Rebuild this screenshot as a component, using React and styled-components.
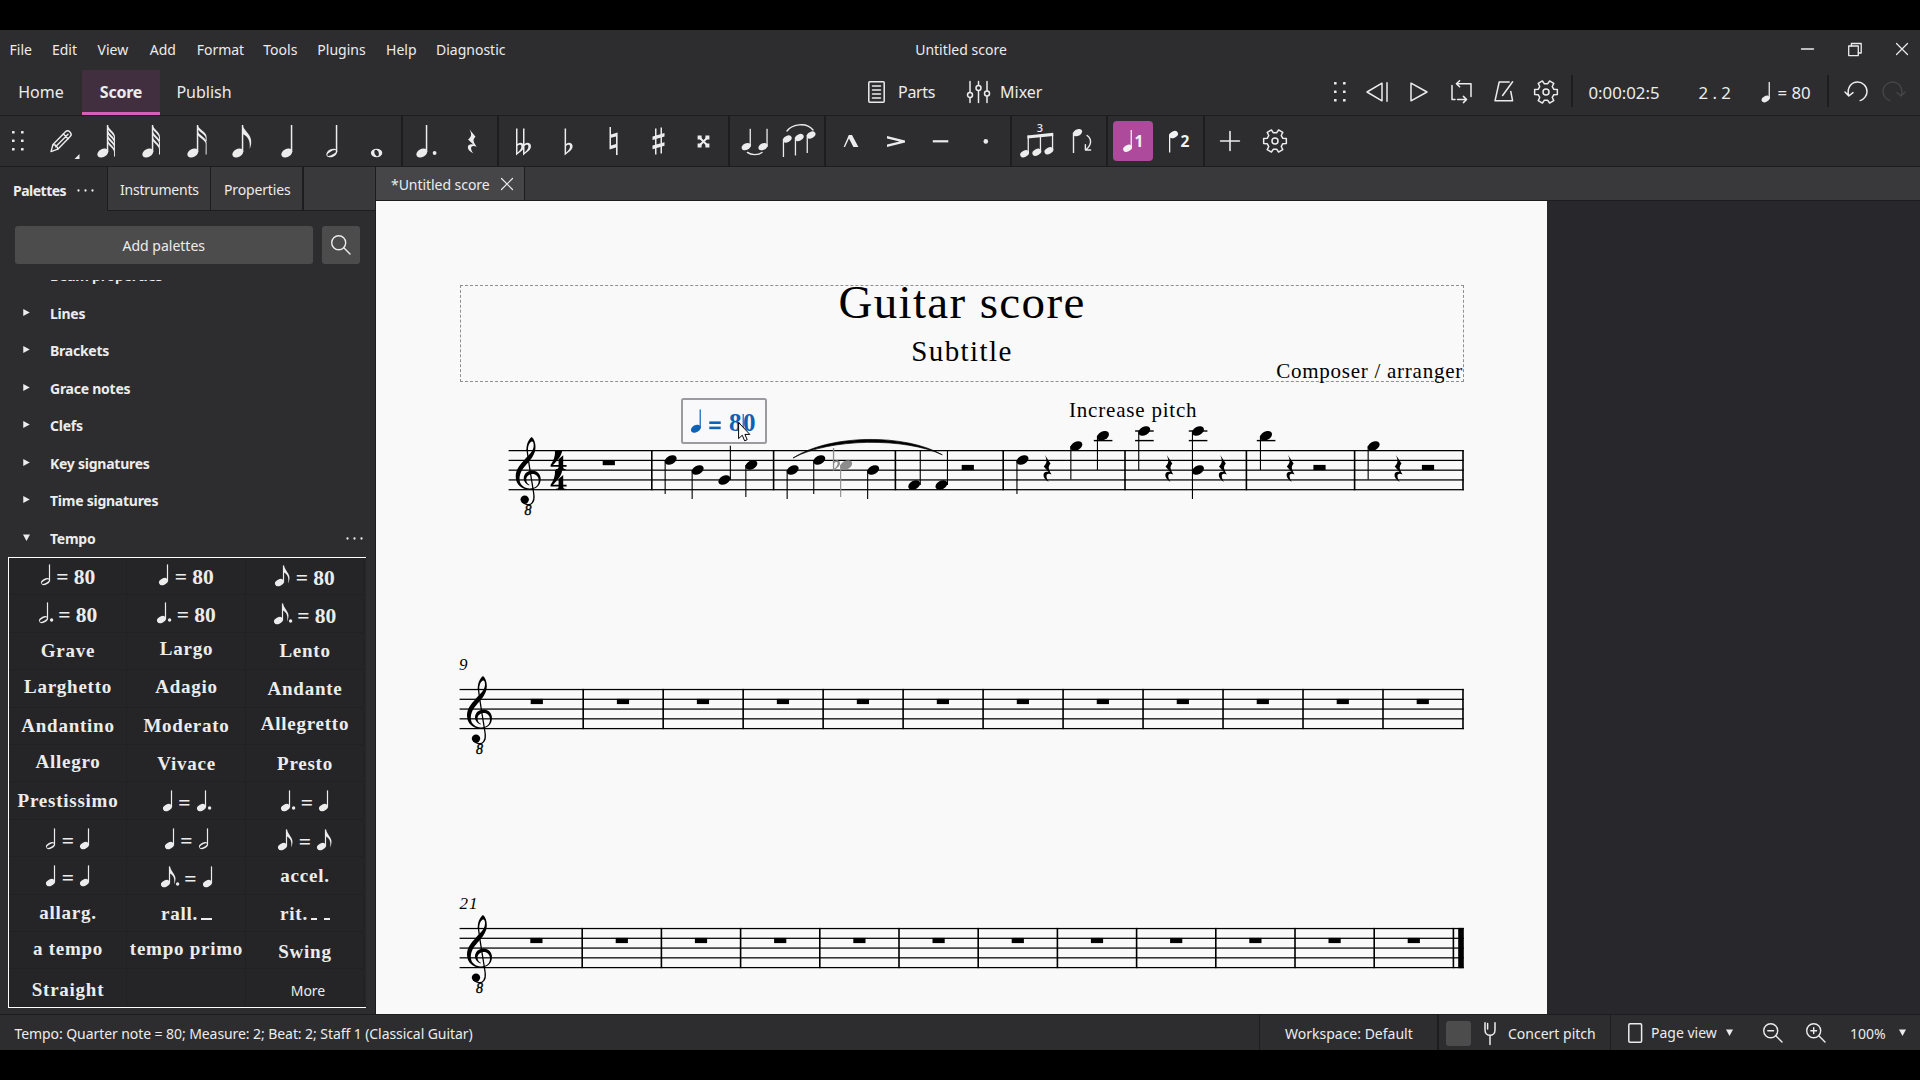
import React from "react";
import styled, { createGlobalStyle, css } from "styled-components";

const c = {
  bar: "#2d2d30",
  line: "#1d1d1f",
  tab: "#39393b",
  docTab: "#464649",
  text: "#ececec",
  button: "#4c4c4d",
  palette: "#252527",
  accent: "#ad4a9b",
  canvas: "#28282c",
  page: "#f9f9f9",
};

const GlobalStyle = createGlobalStyle`
  * { box-sizing: border-box; }
  body {
    margin: 0;
    background: #000;
    color: ${c.text};
    font-family: "Noto Sans", "Open Sans", sans-serif;
    font-size: 14px;
  }
  svg { display: block; flex: none; }
`;

const Screen = styled.div`
  display: flex;
  flex-direction: column;
  width: 1920px;
  height: 1080px;
  padding: 30px 0;
  background: #000;
  overflow: hidden;
  white-space: nowrap;
`;

/* ---------- title bar ---------- */
const TitleBar = styled.header`
  display: grid;
  grid-template-columns: 1fr auto 1fr;
  align-items: center;
  height: 40px;
  padding-bottom: 2px;
  background: ${c.bar};
`;
const Menu = styled.nav`
  display: flex;
  padding-left: 9.5px;
  gap: 20px;
`;
const MenuItem = styled.span`
  margin-left: ${(p) => p.$ml || 0}px;
`;
const WindowTitle = styled.span`
  padding-left: 2px;
`;
const WindowControls = styled.div`
  display: flex;
  justify-content: flex-end;
  padding-right: 12.5px;
  gap: 34px;
`;

/* ---------- main toolbar ---------- */
const MainBar = styled.div`
  display: flex;
  height: 46px;
  background: ${c.bar};
  border-bottom: 1px solid ${c.line};
`;
const NavTab = styled.div`
  display: flex;
  align-items: center;
  justify-content: center;
  width: ${(p) => p.$w}px;
  font-size: 16px;
  padding-bottom: 2px;
  ${(p) =>
    p.$active &&
    css`
      font-weight: 700;
      letter-spacing: -0.2px;
      background: #412f40;
      padding: 1px 0 0;
      border-bottom: 3px solid #d55fbb;
    `}
`;
const ViewButton = styled.div`
  display: flex;
  align-items: center;
  width: ${(p) => p.$w}px;
  padding-bottom: 2px;
  margin-left: ${(p) => p.$ml || 0}px;
  gap: ${(p) => p.$gap}px;
  font-size: 16px;
  letter-spacing: ${(p) => p.$ls}px;
`;
const Slot = styled.div`
  display: flex;
  align-items: center;
  justify-content: center;
  width: ${(p) => p.$w || 45}px;
  margin-left: ${(p) => p.$ml || 0}px;
  padding-bottom: ${(p) => p.$pb || 0}px;
`;
const Divider = styled.div`
  width: ${(p) => p.$w || 2}px;
  margin: ${(p) => p.$m || "0"};
  background: ${c.line};
`;
const Readout = styled.div`
  display: flex;
  align-items: center;
  width: ${(p) => p.$w}px;
  gap: 3px;
  font-size: 16.8px;
`;

/* ---------- note input toolbar ---------- */
const NoteBar = styled.div`
  display: flex;
  height: 51px;
  background: ${c.bar};
  border-bottom: 1px solid ${c.line};
`;
const VoiceSlot = styled(Slot)`
  margin: 5px 3px 5px 2px;
  width: 40px;
  border-radius: 4px;
  background: ${(p) => (p.$on ? c.accent : "transparent")};
`;

/* ---------- body ---------- */
const Body = styled.div`
  display: flex;
  height: 847px;
`;
const Sidebar = styled.aside`
  display: flex;
  flex-direction: column;
  width: 376px;
  background: ${c.bar};
  border-right: 1px solid ${c.line};
`;
const PanelTabs = styled.div`
  display: flex;
  height: 44px;
`;
const PanelTab = styled.div`
  display: flex;
  align-items: center;
  width: ${(p) => p.$w}px;
  padding: 2px 0 0 ${(p) => p.$pl || 0}px;
  gap: 11px;
  letter-spacing: ${(p) => p.$ls || 0}px;
  background: ${(p) => (p.$active ? c.bar : c.tab)};
  border-bottom: ${(p) => (p.$active ? "none" : `1px solid ${c.line}`)};
  border-right: ${(p) => p.$br ?? 1}px solid ${c.line};
  ${(p) => p.$active && "font-weight: 700;"}
`;
const SearchRow = styled.div`
  display: flex;
  gap: 9.5px;
  padding: 15px 15px 0;
  height: 69px;
`;
const GrayButton = styled.button`
  display: flex;
  align-items: center;
  justify-content: center;
  width: ${(p) => p.$w}px;
  height: 38px;
  padding: 0;
  border: 0;
  border-radius: 3px;
  background: ${c.button};
  color: ${c.text};
  font: inherit;
`;
const PaletteList = styled.div`
  display: flex;
  flex-direction: column;
  height: 277px;
  justify-content: flex-end;
  overflow: hidden;
`;
const PaletteRow = styled.div`
  display: flex;
  flex: none;
  align-items: center;
  height: 37.5px;
  padding: 0 12px 0 23px;
  font-weight: 700;
  letter-spacing: -0.25px;
`;
const ArrowBox = styled.div`
  width: 27px;
  padding-bottom: 2px;
`;
const Grow = styled.div`
  flex: 1;
`;
const PaletteGrid = styled.div`
  display: grid;
  grid-template-columns: 118px 119px 118px;
  grid-template-rows: repeat(12, 37.42px);
  width: 358px;
  margin-left: 8px;
  background: ${c.palette};
  border: solid #fff;
  border-width: 1px 0 1px 1px;
`;
const Cell = styled.div`
  display: flex;
  justify-content: center;
  align-items: baseline;
  height: 100%;
  padding-top: ${(p) => p.$drop}px;
  line-height: 24px;
  box-shadow: inset -1px -1px 0 #212123;
  font-family: "Liberation Serif", serif;
  font-weight: 700;
  font-size: 19px;
  letter-spacing: 0.75px;
`;
const Beat = styled.span`
  font-size: 21.5px;
  letter-spacing: 0;
  margin: 0 ${(p) => p.$after || 0}px 0 ${(p) => p.$before || 0}px;
`;
const MoreLink = styled.span`
  font-family: "Noto Sans", sans-serif;
  font-weight: 400;
  font-size: 14px;
  letter-spacing: 0;
  padding-left: 6px;
`;

const Main = styled.main`
  display: flex;
  flex-direction: column;
  flex: 1;
`;
const DocTabs = styled.div`
  display: flex;
  height: 34px;
  background: ${c.tab};
  border-bottom: 1px solid ${c.line};
`;
const DocTab = styled.div`
  display: flex;
  align-items: center;
  width: 149px;
  padding: 1px 0 0 15px;
  gap: 11px;
  letter-spacing: -0.05px;
  background: ${c.docTab};
  border-right: 1px solid ${c.line};
`;
const Canvas = styled.div`
  display: flex;
  flex: 1;
  background: ${c.canvas};
`;
const Page = styled.div`
  width: 1171px;
  height: 813px;
  padding-top: 84px;
  background: ${c.page};
  color: #000;
  font-family: "Liberation Serif", serif;
`;
const TitleFrame = styled.div`
  height: 97px;
  margin: 0 83px 0 84px;
  border: 1px dashed #909090;
`;
const ScoreTitle = styled.h1`
  margin: 0;
  font-size: 47px;
  font-weight: 400;
  line-height: 32px;
  letter-spacing: 1.35px;
  text-align: center;
`;
const Credits = styled.div`
  display: grid;
  grid-template-columns: 1fr auto 1fr;
  margin-top: 17px;
`;
const Subtitle = styled.div`
  grid-column: 2;
  font-size: 29px;
  line-height: 32px;
  letter-spacing: 1.4px;
`;
const Composer = styled.div`
  margin-top: 24px;
  font-size: 21px;
  line-height: 24px;
  letter-spacing: 0.75px;
  justify-self: end;
`;

/* ---------- status bar ---------- */
const StatusBar = styled.footer`
  display: flex;
  height: 36px;
  background: ${c.bar};
  border-top: 1px solid ${c.line};
`;
const StatusItem = styled.div`
  display: flex;
  align-items: center;
  width: ${(p) => p.$w}px;
  padding: ${(p) => p.$pt ?? 1}px 0 0 ${(p) => p.$pl || 0}px;
  gap: ${(p) => p.$gap || 0}px;
  letter-spacing: ${(p) => p.$ls || 0}px;
`;
const CheckBox = styled.div`
  width: 25px;
  height: 25px;
  border-radius: 3px;
  background: ${c.button};
`;

/* ---------- icons ---------- */
const Icon = ({ w, h, children, sw = 1.5, color = "#ececec", vb }) => (
  <svg width={w} height={h} viewBox={vb || `0 0 ${w} ${h}`} fill="none" stroke={color} strokeWidth={sw} strokeLinecap="round" strokeLinejoin="round" overflow="visible">
    {children}
  </svg>
);

const Grip = () => (
  <svg width="12" height="20" fill={c.text}>
    {[0, 8.5, 17].map((y) => [0, 9].map((x) => <rect key={`${x}-${y}`} x={x} y={y} width="2.6" height="2.6" rx="0.6" />))}
  </svg>
);

const gearPath = (() => {
  const pts = [];
  for (let i = 0; i < 6; i++) {
    [[-19, 8.3], [-12, 11.6], [12, 11.6], [19, 8.3]].forEach(([da, r]) => {
      const a = ((i * 60 + da) * Math.PI) / 180;
      pts.push(`${(12 + r * Math.cos(a)).toFixed(2)} ${(12 + r * Math.sin(a)).toFixed(2)}`);
    });
  }
  return `M${pts.join("L")}Z`;
})();
const Gear = () => (
  <Icon w={24} h={24} sw={1.5}>
    <path d={gearPath} />
    <circle cx="12" cy="12" r="3" />
  </Icon>
);
const Dots = () => (
  <svg width="17" height="3" fill={c.text}>
    <circle cx="1.5" cy="1.5" r="1.15" />
    <circle cx="8.5" cy="1.5" r="1.15" />
    <circle cx="15.5" cy="1.5" r="1.15" />
  </svg>
);
const Cross = () => (
  <Icon w={12} h={12} sw={1.2}>
    <path d="M0.5 0.5L11.5 11.5M11.5 0.5L0.5 11.5" />
  </Icon>
);
const Magnifier = ({ mark }) => (
  <Icon w={20} h={20} sw={1.4}>
    <circle cx="7.7" cy="7.7" r="7" />
    <path d="M12.8 12.8L19 19" />
    {mark && <path d={mark} />}
  </Icon>
);
const Caret = ({ down, size = 7 }) => (
  <svg width={size} height={size} viewBox="0 0 6 6" fill={c.text}>
    <path d={down ? "M0 0.4H6L3 6Z" : "M0.2 0V6L5.8 3Z"} />
  </svg>
);

/* a notehead is drawn round its own centre */
const Head = ({ x, y, r = 5.6, fill = c.text, open }) =>
  open ? (
    <path
      transform={`translate(${x} ${y}) rotate(-28) scale(${r / 5.6})`}
      fillRule="evenodd"
      fill={fill}
      d="M-6 0A6 3.9 0 1 1 6 0A6 3.9 0 1 1 -6 0ZM-4.9 0.5A4.9 1.7 0 1 0 4.9 -0.5A4.9 1.7 0 1 0 -4.9 0.5Z"
    />
  ) : (
    <ellipse cx={x} cy={y} rx={r * 1.06} ry={r * 0.72} fill={fill} transform={`rotate(-28 ${x} ${y})`} />
  );

const flag = (x, y) =>
  `M${x} ${y}C${x + 1} ${y + 6} ${x + 9.5} ${y + 9} ${x + 8.6} ${y + 18}C${x + 8.4} ${y + 20} ${x + 8} ${y + 22} ${x + 7} ${y + 24}C${x + 8.2} ${y + 16} ${x + 5} ${y + 11} ${x} ${y + 9}Z`;
/* one of several stacked flags: a diagonal blade that thins into a vertical tail */
const blade = (x, y, w, end) =>
  `M${x} ${y}C${x + 0.8} ${y + 4.6} ${x + w} ${y + 6.5} ${x + w} ${y + 12}L${x + w} ${end}H${x + w - 1}L${x + w - 0.9} ${y + 13}C${x + w - 1.2} ${y + 9.5} ${x + 3} ${y + 8} ${x} ${y + 4.2}Z`;

const DurationNote = ({ flags = 0, open, dot }) => {
  const sx = flags ? 22.6 : 26.6;
  const hx = sx - 4.8;
  const step = flags === 4 ? 4.8 : 5.8;
  const w = flags === 2 ? 9 : 7.4;
  const last = flags === 4 ? 40.4 : 38.5;
  return (
    <svg width="45" height="50" fill={c.text}>
      <Head x={hx} y={37} r={5.5} open={open} />
      <rect x={sx - 0.8} y="9" width="1.5" height="27" />
      {flags === 1 && <path d={flag(sx, 9)} />}
      {flags > 1 &&
        Array.from({ length: flags }, (_, i) => {
          const y = 9 + i * step;
          return <path key={i} d={blade(sx, y, w, i === flags - 1 ? last : y + 16)} />;
        })}
      {dot && <circle cx="34.6" cy="37" r="1.9" />}
    </svg>
  );
};
const WholeNote = () => (
  <svg width="45" height="50">
    <path fillRule="evenodd" fill={c.text} d="M15.9 37A5.7 4.2 0 1 1 27.3 37A5.7 4.2 0 1 1 15.9 37ZM19.3 35.8A2 3.1 -20 1 0 23.9 38.2A2 3.1 -20 1 0 19.3 35.8Z" />
  </svg>
);
const restPath =
  "M1.6 0L7.2 8.4C4.6 11.8 4.8 13.4 8.2 19.4C5 18 2.8 18.8 3.2 21.6C3.4 23.6 4.2 25.2 5.4 27C2 25 0 22.5 .2 19.8C.4 17.2 2.6 16.2 5.2 17L.4 11.4C3.8 8 4 5.6 1.6 0Z";
const flatD = "M0 0H1.5V15.5C4 13.3 8 14 8 17.8C8 21.5 4 23.6 0 27ZM1.5 17.6V24.2C4 22 5.4 20 5.4 18C5.4 15.8 3 15.7 1.5 17.6Z";
const Glyph = ({ children }) => (
  <svg width="45" height="50" fill={c.text} overflow="visible">
    {children}
  </svg>
);
const strokeProps = { fill: "none", stroke: c.text, strokeWidth: 1.4, strokeLinecap: "round", strokeLinejoin: "round" };

const Pencil = () => (
  <Glyph>
    <g {...strokeProps}>
      <path d="M11 35.6L13 28.5L25.5 15.8C28.3 13 33 17.6 30.2 20.5L17.8 33.2Z" />
      <path d="M13.2 28.7C15.8 28.6 17.8 30.6 17.7 33M15.6 30.8L28 18.2M23.4 18L28 22.7" />
    </g>
    <path d="M39.5 38V43H34.5Z" />
  </Glyph>
);
const Tie = () => (
  <Glyph>
    <Head x={14.2} y={30.6} r={4.6} />
    <rect x="17.6" y="12.8" width="1.3" height="18" />
    <Head x={31} y={30.6} r={4.6} />
    <rect x="34.4" y="12.8" width="1.3" height="18" />
    <path {...strokeProps} d="M15.4 36.4C19 39.4 26.6 39.4 30 36.4" />
  </Glyph>
);
const SlurIcon = () => (
  <Glyph>
    {[[10.4, 23], [22.4, 21.5], [34.2, 19]].map(([x, y]) => (
      <g key={x}>
        <Head x={x} y={y} r={4.3} />
        <rect x={x - 4.6} y={y} width="1.3" height={18} />
      </g>
    ))}
    <path {...strokeProps} d="M10 15C14 9 29 5 36 14" />
  </Glyph>
);
const Tuplet = () => (
  <Glyph>
    <text x="26" y="15.6" fontSize="11" textAnchor="middle" fontFamily="Noto Sans, sans-serif" fontWeight="500">3</text>
    <path d="M13.4 19.4L39.2 16.8V20L13.4 22.6Z" />
    {[[10.6, 37.7], [22.8, 36.3], [34.9, 34.7]].map(([x, y], i) => (
      <g key={x}>
        <Head x={x} y={y} r={4.4} />
        <rect x={x + 3} y={19.5 - i} width="1.3" height={y - 20 + i} />
      </g>
    ))}
  </Glyph>
);
const Flip = () => (
  <Glyph>
    <Head x={18.6} y={16.6} r={4.6} />
    <rect x="13.8" y="16.5" width="1.4" height="20.5" />
    <path {...strokeProps} d="M28.1 19.5C33.1 23 32.6 29.5 27.1 33.5M26.4 28.6V34H31.6" />
  </Glyph>
);
const Voice = ({ n }) => (
  <svg width="40" height="40" fill="#f2f2f2" overflow="visible">
    {n === 1 ? (
      <>
        <Head x={14.6} y={27.3} r={4.4} fill="#f2f2f2" />
        <rect x="17.6" y="9" width="1.3" height="18" />
      </>
    ) : (
      <>
        <Head x={15.6} y={13.6} r={4.4} fill="#f2f2f2" />
        <rect x="11" y="13.5" width="1.3" height="18" />
      </>
    )}
    <text x={n === 1 ? 21.5 : 22.5} y="26" fontSize="15.5" fontWeight="700" fontFamily="Noto Sans, sans-serif">{n}</text>
  </svg>
);

/* small notes for the tempo palette; they sit on the text baseline */
const Tone = ({ kind = "q", dot, fill = c.text }) => {
  const w = (kind === "e" ? 14.5 : 9.5) + (dot ? (kind === "e" ? 3 : 4) : 0);
  return (
    <svg width={w} height="20" fill={fill} overflow="visible">
      <Head x={4.4} y={17.6} r={4.4} open={kind === "h"} fill={fill} />
      <rect x="7.9" y="0.4" width="1.2" height="17" />
      {kind === "e" && <path d="M9 0.4C9.5 5 15.6 9 14.4 14C14.2 15.8 13.8 17 13 18.6C14.2 12.4 12.5 9.5 9 7.4Z" />}
      {dot && <circle cx={w - 0.9} cy="18" r="1.7" />}
    </svg>
  );
};
const Mark = ({ a, b }) => (
  <>
    <Tone {...a} />
    <Beat $before={6} $after={b ? 6 : 5}>=</Beat>
    {b ? <Tone {...b} /> : <Beat>80</Beat>}
  </>
);
const Dash = styled.span`
  width: ${(p) => p.$w}px;
  height: 1.5px;
  margin-left: ${(p) => p.$ml}px;
  background: ${c.text};
`;

const q = { kind: "q" }, h = { kind: "h" }, e = { kind: "e" };
const qd = { kind: "q", dot: true }, hd = { kind: "h", dot: true }, ed = { kind: "e", dot: true };
/* each entry: what the cell shows, and its baseline below the top of the cell */
const cells = [
  [<Mark a={h} />, 25.5], [<Mark a={q} />, 25.5], [<Mark a={e} />, 26.5],
  [<Mark a={hd} />, 26], [<Mark a={qd} />, 26], [<Mark a={ed} />, 27],
  ["Grave", 24.9], ["Largo", 22.9], ["Lento", 24.9],
  ["Larghetto", 23.2], ["Adagio", 23.2], ["Andante", 25.2],
  ["Andantino", 25], ["Moderato", 25], ["Allegretto", 22.8],
  ["Allegro", 23.8], ["Vivace", 25.8], ["Presto", 25.8],
  ["Prestissimo", 25.2], [<Mark a={q} b={qd} />, 26.7], [<Mark a={qd} b={q} />, 26.7],
  [<Mark a={h} b={q} />, 27.2], [<Mark a={q} b={h} />, 27.2], [<Mark a={e} b={e} />, 28],
  [<Mark a={q} b={q} />, 27.2], [<Mark a={ed} b={q} />, 28], ["accel.", 25.6],
  ["allarg.", 25], [<>rall.<Dash $w={11} $ml={3} /></>, 26.2], [<>rit.<Dash $w={6} $ml={3} /><Dash $w={6} $ml={7} /></>, 26.2],
  ["a tempo", 23.8], ["tempo primo", 23.8], ["Swing", 26.8],
  ["Straight", 27], ["", 24], [<MoreLink>More</MoreLink>, 28.6],
];

/* ---------- engraving ---------- */
const SP = 9.77;
const Staff = ({ x1, x2, y }) =>
  [0, 1, 2, 3, 4].map((i) => <rect key={i} x={x1} y={y + i * SP - 0.6} width={x2 - x1} height="1.25" fill="#000" />);
const Bars = ({ xs, y }) => xs.map((x) => <rect key={x} x={x - 0.8} y={y - 0.6} width="1.6" height={4 * SP + 1.2} fill="#000" />);
const BlockRest = ({ x, y }) => <rect x={x - 6.1} y={y} width="12.2" height="5.2" />;
const QuarterRest = ({ x }) => <path d={restPath} transform={`translate(${x - 4.2} 455)`} />;
const Clef = ({ x, y }) => (
  <g transform={`translate(${x} ${y})`}>
    <path d="M16 0C18.5 2 19.8 6 19.8 10C19.8 17 15.5 22 12.5 25.5C8 30.5 3.8 35 3.8 42C3.8 48 8.5 51.2 14 51.4C19.5 51.5 23 48.5 23 43.5C23 39.4 20 37 17 37C13 37 10.5 39.5 10.5 42.5C10.5 45 11.8 46.8 13.8 47.8L13.4 48.5C10 47 8 44.5 8 41.5C8 37 11.5 33.4 16.5 33.4C21.5 33.4 25 37 25 42C25 48.5 20 52.6 13.8 52.6C6 52.6 0 47.5 0 39.5C0 32.5 4.5 27.5 9 22.5C13 18 18 14 18 8.5C18 6 17.2 4.4 16.2 4.6C14 5 12.2 9 12.2 13L10.8 13C10.6 8 12.5 2.5 16 0Z" />
    <path d="M11.4 12C11.8 20 17.2 50 18.2 58C19 65 15.5 68.2 12 67.7C9.5 67.4 7.5 66 6.5 64" fill="none" stroke="#000" strokeWidth="1.3" />
    <circle cx="9" cy="62.6" r="4.2" />
    <text x="12.4" y="77.6" fontSize="14" fontStyle="italic" textAnchor="middle" fontFamily="Liberation Serif, serif" stroke="#000" strokeWidth="0.4">8</text>
  </g>
);
const fourPath =
  "M4.4 0H11.6C11 5.5 6.5 10.5 2.4 14.4H8V8.6L12.6 4.6V14.4H16V16.1H12.6C12.6 17.8 13 18.3 15 18.4V19.5H5.2V18.4C7.4 18.3 8 17.8 8 16.1H0V14.4C3 10.5 4.8 5.5 4.4 0Z";

const Note = ({ x, y, to, up, fill = "#000", ledger = [] }) => (
  <g fill={fill}>
    <Head x={x} y={y} r={6} fill={fill} />
    <rect x={up ? x + 5.5 : x - 6.1} y={Math.min(y, to)} width="1.1" height={Math.abs(to - y)} />
    {ledger.map((l) => <rect key={l} x={x - 9.2} y={l - 0.7} width="18.6" height="1.4" />)}
  </g>
);

const notes = [
  { x: 670.7, y: 460, to: 494 }, { x: 697.7, y: 470, to: 499 }, { x: 724.3, y: 480, to: 445.7, up: true }, { x: 751.4, y: 465, to: 497 },
  { x: 792.7, y: 470, to: 499 }, { x: 819.3, y: 460, to: 494 }, { x: 846.2, y: 465, to: 497, fill: "#8c8c8c" }, { x: 873.2, y: 470, to: 499 },
  { x: 914.2, y: 485, to: 451, up: true }, { x: 941.4, y: 485, to: 451, up: true },
  { x: 1022.5, y: 460, to: 494 }, { x: 1076.4, y: 446, to: 479.5 }, { x: 1103, y: 435.8, to: 470, ledger: [440.6] },
  { x: 1144.3, y: 431, to: 470, ledger: [431, 440.6] }, { x: 1198, y: 431, to: 499, ledger: [431, 440.6] }, { x: 1198, y: 470, to: 471 },
  { x: 1266, y: 435.8, to: 470, ledger: [440.6] }, { x: 1373.7, y: 446, to: 479.5 },
];

const SystemOne = () => (
  <svg width="1171" height="258" viewBox="376 382 1171 258">
    <Staff x1={508.6} x2={1463.8} y={450.6} />
    <Bars xs={[651.8, 773.6, 895.4, 1003.2, 1125, 1246.4, 1354.6, 1463]} y={450.6} />
    <Clef x={515.7} y={437} />
    <path d={fourPath} transform="translate(550.6 450.6)" />
    <path d={fourPath} transform="translate(550.6 470.3)" />
    <BlockRest x={608.8} y={460} />
    {notes.map((n, i) => <Note key={i} {...n} />)}
    <path d={flatD} fill="#8c8c8c" transform="translate(832.9 448) scale(.88 .86)" />
    <path d="M793 458C830 434 905 433.6 942.3 454.8C905 437.4 830 438 793 458Z" stroke="#000" strokeWidth="0.7" />
    {[967.8, 1319.5, 1428].map((x) => <BlockRest key={x} x={x} y={464.9} />)}
    {[1047.5, 1169.3, 1222.8, 1290.6, 1398.5].map((x) => <QuarterRest key={x} x={x} />)}
    <text x="1069" y="417" fontSize="21" letterSpacing="0.8" fontFamily="Liberation Serif, serif">Increase pitch</text>
    <rect x="682" y="399" width="84" height="44" rx="1.5" fill="#f9f9fb" stroke="#9b9b9f" strokeWidth="2" />
    <g fill="#0b62b8">
      <Head x={695.8} y={428.7} r={4.9} fill="#0b62b8" />
      <rect x="699.6" y="409.5" width="1.2" height="19" />
      <rect x="709.3" y="421.4" width="11.4" height="2.6" />
      <rect x="709.3" y="426.6" width="11.4" height="2.6" />
      <text x="729" y="431" fontSize="25" letterSpacing="1.4" fontWeight="700" fontFamily="Liberation Serif, serif">80</text>
      <rect x="742.6" y="414" width="1.2" height="17" />
    </g>
    <path d="M738.6 422.5V438.6L742.3 435.2L744.6 440.8L747.2 439.7L744.9 434.4H749.8Z" fill="#fff" stroke="#000" strokeWidth="1" />
  </svg>
);

const MeasureNumber = ({ x, y, children }) => (
  <text x={x} y={y} fontSize="17" fontStyle="italic" letterSpacing="0.9" fontFamily="Liberation Serif, serif">{children}</text>
);
const bars2 = Array.from({ length: 12 }, (_, i) => 583.2 + i * 79.98);
const SystemTwo = () => (
  <svg width="1171" height="250" viewBox="376 640 1171 250">
    <MeasureNumber x={459} y={670}>9</MeasureNumber>
    <Staff x1={459.6} x2={1463.8} y={689.5} />
    <Bars xs={bars2} y={689.5} />
    <Clef x={467} y={676} />
    <BlockRest x={536.8} y={698.9} />
    {bars2.slice(1).map((x) => <BlockRest key={x} x={x - 40.2} y={698.9} />)}
  </svg>
);
const bars3 = Array.from({ length: 12 }, (_, i) => 582.2 + i * 79.2);
const SystemThree = () => (
  <svg width="1171" height="124" viewBox="376 890 1171 124">
    <MeasureNumber x={459.5} y={909}>21</MeasureNumber>
    <Staff x1={459.6} x2={1463.8} y={928.5} />
    <Bars xs={bars3} y={928.5} />
    <rect x="1458.2" y="927.9" width="5.6" height="40.3" />
    <Clef x={467} y={915} />
    <BlockRest x={536.4} y={937.9} />
    {bars3.slice(1).map((x) => <BlockRest key={x} x={x - 39.6} y={937.9} />)}
  </svg>
);

const menu = [["File", 0], ["Edit", 0], ["View", 0.6], ["Add", 1.5], ["Format", 0.8], ["Tools", -0.9], ["Plugins", 0], ["Help", 0.4], ["Diagnostic", -0.6]];
const palettes = ["Beam properties", "Lines", "Brackets", "Grace notes", "Clefs", "Key signatures", "Time signatures"];

export default function App() {
  return (
    <Screen>
      <GlobalStyle />
      <TitleBar>
        <Menu>{menu.map(([m, ml]) => <MenuItem key={m} $ml={ml}>{m}</MenuItem>)}</Menu>
        <WindowTitle>Untitled score</WindowTitle>
        <WindowControls>
          <Icon w={13} h={13} sw={1.4}><path d="M0.5 6H12.5" /></Icon>
          <Icon w={14} h={13} sw={1.3}>
            <rect x="0.7" y="3" width="9.6" height="9.6" />
            <path d="M3.4 3V0.5H13.2V10H10.3" />
          </Icon>
          <Cross />
        </WindowControls>
      </TitleBar>

      <MainBar>
        <NavTab $w={82}>Home</NavTab>
        <NavTab $w={78} $active style={undefined}>Score</NavTab>
        <NavTab $w={88}>Publish</NavTab>
        <ViewButton $ml={620} $w={99} $gap={13} $ls={-0.3}>
          <Icon w={17} h={22} sw={1.5}>
            <rect x="0.8" y="0.8" width="15.4" height="20.4" rx="1" />
            <path d="M4.5 5H12.5M4.5 9H12.5M4.5 13H12.5M4.5 17H12.5" />
          </Icon>
          Parts
        </ViewButton>
        <ViewButton $w={358} $gap={10} $ls={0}>
          <Icon w={23} h={22} sw={1.5}>
            <path d="M3 0.5V11M3 17V21.5M11.5 0.5V4M11.5 10V21.5M20 0.5V9.5M20 15.5V21.5" />
            <circle cx="3" cy="14" r="2.5" />
            <circle cx="11.5" cy="7" r="2.5" />
            <circle cx="20" cy="12.4" r="2.5" />
          </Icon>
          Mixer
        </ViewButton>
        <Slot $w={30} $pb={2}><Grip /></Slot>
        <Slot $w={42.3} $pb={2} $ml={0.5}>
          <Icon w={22} h={20}><path d="M16 1.2V18.8L1 10ZM21 0.8V19.2" /></Icon>
        </Slot>
        <Slot $w={42.3} $pb={2} $ml={0.5}>
          <Icon w={18} h={20}><path d="M1 1.2V18.8L17 10Z" /></Icon>
        </Slot>
        <Slot $w={42.3} $pb={2}>
          <Icon w={21} h={23}><path d="M4 19.5H1V5.5M5.5 3.8H20V16.5M8.6 0.8L5.4 3.8L8.6 6.8M6.5 19.5H15.5M12.4 16.4L15.6 19.5L12.4 22.6" /></Icon>
        </Slot>
        <Slot $w={42.3} $pb={2}>
          <Icon w={20} h={21}><path d="M15.2 1H5.2L1 19.8H18.6L16.8 10.5M8.6 14.5L18.6 0.8" /></Icon>
        </Slot>
        <Slot $w={42.3} $pb={2}><Gear /></Slot>
        <Divider $m="5px 15px 8px 4px" />
        <Readout $w={110}>0:00:02:5</Readout>
        <Readout $w={63}>2 . 2</Readout>
        <Readout $w={66}>
          <svg width="13" height="22" fill={c.text}>
            <Head x={4.6} y={17} r={4} />
            <rect x="7.6" y="0" width="1.3" height="17" />
          </svg>
          = 80
        </Readout>
        <Divider $m="5px 14px 8px 0" />
        <Slot $w={26} $pb={2}>
          <Icon w={24} h={21} sw={1.5}><path d="M4.6 14.5C2.6 6 8 1 13.5 1C18.5 1 23 5 23 10.4C23 14.6 20 18.4 16.2 19.6M1 11L4.8 15L9 11.6" /></Icon>
        </Slot>
        <Slot $w={26} $ml={12} $pb={2}>
          <Icon w={24} h={21} sw={1.5} color="#444447"><path d="M19.4 14.5C21.4 6 16 1 10.5 1C5.5 1 1 5 1 10.4C1 14.6 4 18.4 7.8 19.6M23 11L19.2 15L15 11.6" /></Icon>
        </Slot>
      </MainBar>

      <NoteBar>
        <Slot $w={39.5} $ml={-2}><Grip /></Slot>
        <Slot $ml={2}><Pencil /></Slot>
        <Slot><DurationNote flags={4} /></Slot>
        <Slot><DurationNote flags={3} /></Slot>
        <Slot><DurationNote flags={2} /></Slot>
        <Slot><DurationNote flags={1} /></Slot>
        <Slot><DurationNote /></Slot>
        <Slot><DurationNote open /></Slot>
        <Slot><WholeNote /></Slot>
        <Divider $m="0 2px 0 1.5px" />
        <Slot $ml={-4.6}><DurationNote dot /></Slot>
        <Slot $ml={4.6}><Glyph><path transform="translate(17.6 13.2) scale(1.1 .9)" d={restPath} /></Glyph></Slot>
        <Divider $m="0 2px 0 1.5px" />
        <Slot>
          <Glyph>
            <path transform="translate(15 12.4)" d={flatD} />
            <path transform="translate(22 12.4)" d={flatD} />
          </Glyph>
        </Slot>
        <Slot><Glyph><path transform="translate(18.6 12.4)" d={flatD} /></Glyph></Slot>
        <Slot>
          <Glyph><path fillRule="evenodd" d="M18.5 11H20V18.4L26.6 16.6V39H25V31.6L18.5 33.4ZM20 21.8V29.4L25 28V20.4Z" /></Glyph>
        </Slot>
        <Slot>
          <Glyph><path d="M19 12.5H20.5V38.5H19ZM24.5 11.5H26V37.5H24.5ZM16.5 20.4L28.5 17V20.6L16.5 24ZM16.5 29.6L28.5 26.2V29.8L16.5 33.2Z" /></Glyph>
        </Slot>
        <Slot>
          <Glyph>
            <path d="M18 21L27 30M27 21L18 30" stroke={c.text} strokeWidth="2" />
            <path d="M16.6 19.6H20.6V23.6H16.6ZM24.4 19.6H28.4V23.6H24.4ZM16.6 27.4H20.6V31.4H16.6ZM24.4 27.4H28.4V31.4H24.4Z" />
          </Glyph>
        </Slot>
        <Divider $m="0 2.5px 0 2px" />
        <Slot><Tie /></Slot>
        <Slot><SlurIcon /></Slot>
        <Divider $m="0 2px 0 1.5px" />
        <Slot><Glyph><path d="M15.6 31L20.8 19H24L30.4 31H25.4L21 22.4L17 31Z" /></Glyph></Slot>
        <Slot><Glyph><path d="M14 20V22.4L26.5 25.4L14 28.6V31L32 26.4V24.6Z" /></Glyph></Slot>
        <Slot><Glyph><rect x="14.8" y="24.2" width="15.5" height="2.2" /></Glyph></Slot>
        <Slot><Glyph><circle cx="22.8" cy="25.4" r="2.3" /></Glyph></Slot>
        <Divider $m="0 2.5px 0 2px" />
        <Slot><Tuplet /></Slot>
        <Slot><Flip /></Slot>
        <Divider $m="0 3px 0 2px" />
        <VoiceSlot $on><Voice n={1} /></VoiceSlot>
        <VoiceSlot><Voice n={2} /></VoiceSlot>
        <Divider $m="0 2.5px 0 2px" />
        <Slot><Icon w={20} h={20} sw={1.6}><path d="M0.6 10H19.4M10 0.6V19.4" /></Icon></Slot>
        <Slot><Gear /></Slot>
      </NoteBar>

      <Body>
        <Sidebar>
          <PanelTabs>
            <PanelTab $w={108} $pl={13} $ls={-0.5} $active>Palettes<Dots /></PanelTab>
            <PanelTab $w={103} $pl={12} $ls={-0.2}>Instruments</PanelTab>
            <PanelTab $w={93} $pl={13} $br={2} $ls={-0.15}>Properties</PanelTab>
            <PanelTab $w={71} $br={0} />
          </PanelTabs>
          <SearchRow>
            <GrayButton $w={298}>Add palettes</GrayButton>
            <GrayButton $w={38}><Magnifier /></GrayButton>
          </SearchRow>
          <PaletteList>
            {palettes.map((p, i) => (
              <PaletteRow key={p}>
                <ArrowBox>{i > 0 && <Caret />}</ArrowBox>
                {p}
              </PaletteRow>
            ))}
            <PaletteRow>
              <ArrowBox><Caret down /></ArrowBox>
              Tempo
              <Grow />
              <Dots />
            </PaletteRow>
          </PaletteList>
          <PaletteGrid>
            {cells.map(([body, base], i) => (
              <Cell key={i} $drop={base - (typeof body === "string" ? 18.4 : 19.1)}>{body}</Cell>
            ))}
          </PaletteGrid>
        </Sidebar>

        <Main>
          <DocTabs>
            <DocTab>*Untitled score<Cross /></DocTab>
          </DocTabs>
          <Canvas>
            <Page>
              <TitleFrame>
                <ScoreTitle>Guitar score</ScoreTitle>
                <Credits>
                  <Subtitle>Subtitle</Subtitle>
                  <Composer>Composer / arranger</Composer>
                </Credits>
              </TitleFrame>
              <SystemOne />
              <SystemTwo />
              <SystemThree />
            </Page>
          </Canvas>
        </Main>
      </Body>

      <StatusBar>
        <StatusItem $w={1259} $pl={14.5} $ls={-0.075}>Tempo: Quarter note = 80; Measure: 2; Beat: 2; Staff 1 (Classical Guitar)</StatusItem>
        <Divider $w={1} />
        <StatusItem $w={177} $pl={25}>Workspace: Default</StatusItem>
        <Divider />
        <StatusItem $w={171} $pl={7}>
          <CheckBox />
          <Slot $w={37}>
            <Icon w={12} h={23} sw={1.5}><path d="M1 0.8V8C1 15 11 15 11 8V0.8M6 13.4V22.4M3.6 1.5V7" /></Icon>
          </Slot>
          Concert pitch
        </StatusItem>
        <Divider $w={1} />
        <StatusItem $w={152} $pl={17} $gap={9} $pt={0}>
          <Icon w={14} h={20} sw={1.5}><rect x="0.8" y="0.8" width="12.8" height="18.4" rx="1.2" /></Icon>
          Page view
          <Caret down />
        </StatusItem>
        <StatusItem $w={43} $pt={0}><Magnifier mark="M4.8 7.7H10.6" /></StatusItem>
        <StatusItem $w={44} $pt={0}><Magnifier mark="M4.8 7.7H10.6M7.7 4.8V10.6" /></StatusItem>
        <StatusItem $w={49} $pt={2}>100%</StatusItem>
        <StatusItem $w={10} $pt={0}><Caret down /></StatusItem>
      </StatusBar>
    </Screen>
  );
}
